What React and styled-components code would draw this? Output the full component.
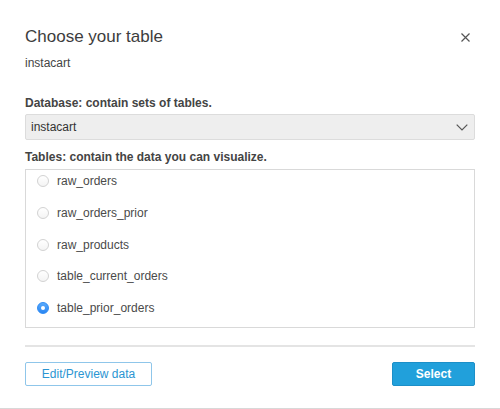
import React, { useState } from 'react';
import styled, { createGlobalStyle } from 'styled-components';

const GlobalStyle = createGlobalStyle`
	body {
		margin: 0;
		background: #fff;
		font-family: "Liberation Sans", Arial, Helvetica, sans-serif;
	}
`;

const Dialog = styled.div`
	width: 500px;
	height: 409px;
	box-sizing: border-box;
	padding: 27px 25px 0;
	border-bottom: 1px solid #d8d8d8;
	background: #fff;
	color: #444;
`;

const Header = styled.div`
	display: flex;
	justify-content: space-between;
	align-items: center;
	height: 20px;
`;

const Title = styled.h1`
	margin: 0;
	font-size: 17px;
	font-weight: normal;
	line-height: 20px;
	color: #3d3d3d;
`;

const CloseButton = styled.button`
	display: flex;
	align-items: center;
	justify-content: center;
	width: 14px;
	height: 14px;
	margin-right: 3px;
	padding: 0;
	border: none;
	background: none;
	cursor: pointer;
`;

const Subtitle = styled.div`
	margin-top: 8px;
	font-size: 12px;
	line-height: 16px;
	color: #444;
`;

const FieldLabel = styled.div`
	margin-top: ${props => props.top}px;
	font-size: 12px;
	font-weight: bold;
	line-height: 16px;
	color: #444;
`;

const SelectBox = styled.div`
	display: flex;
	align-items: center;
	justify-content: space-between;
	margin-top: 3px;
	height: 26px;
	box-sizing: border-box;
	padding: 0 6px 0 5px;
	border: 1px solid #dcdcdc;
	border-radius: 2px;
	background: #eeeeee;
	font-size: 12px;
	color: #333;
`;

const TableList = styled.div`
	margin-top: 4px;
	height: 159px;
	box-sizing: border-box;
	padding-top: 1px;
	border: 1px solid #d9d9d9;
	overflow: hidden;
`;

const Row = styled.label`
	display: flex;
	align-items: center;
	gap: 8px;
	height: 20px;
	padding-left: 11px;
	margin-bottom: 11.75px;
	font-size: 12px;
	color: #4a4a4a;
	cursor: pointer;
`;

const Radio = styled.span`
	width: 12px;
	height: 12px;
	box-sizing: border-box;
	border-radius: 50%;
	display: flex;
	align-items: center;
	justify-content: center;
	border: 1px solid ${props => (props.checked ? '#2f8cf5' : '#d2d2d2')};
	background: ${props => (props.checked ? 'linear-gradient(#5aaafb, #2a86f2)' : 'linear-gradient(#fff, #f4f4f4)')};

	&::after {
		content: '';
		display: ${props => (props.checked ? 'block' : 'none')};
		width: 4px;
		height: 4px;
		border-radius: 50%;
		background: #fff;
	}
`;

const Divider = styled.hr`
	margin: 17px 0 0;
	border: none;
	border-top: 2px solid #e4e4e4;
`;

const Footer = styled.div`
	display: flex;
	justify-content: space-between;
	margin-top: 15px;
`;

const Button = styled.button`
	height: 24px;
	box-sizing: border-box;
	padding: 0;
	width: ${props => props.width}px;
	border-radius: 2px;
	font-family: inherit;
	font-size: 12px;
	cursor: pointer;
	border: 1px solid ${props => (props.primary ? '#1c8fc8' : '#8fc6ea')};
	background: ${props => (props.primary ? '#21a0db' : '#fff')};
	color: ${props => (props.primary ? '#fff' : '#2b95d2')};
	font-weight: ${props => (props.primary ? 'bold' : 'normal')};
`;

const tables = ['raw_orders', 'raw_orders_prior', 'raw_products', 'table_current_orders', 'table_prior_orders'];

export default function App() {
	const [selected, setSelected] = useState('table_prior_orders');

	return (
		<>
			<GlobalStyle />
			<Dialog>
				<Header>
					<Title>Choose your table</Title>
					<CloseButton aria-label="Close">
						<svg width="9" height="9" viewBox="0 0 9 9">
							<path d="M0.5 0.5L8.5 8.5M8.5 0.5L0.5 8.5" stroke="#555" strokeWidth="1.2" />
						</svg>
					</CloseButton>
				</Header>
				<Subtitle>instacart</Subtitle>

				<FieldLabel top={24}>Database: contain sets of tables.</FieldLabel>
				<SelectBox>
					<span>instacart</span>
					<svg width="12" height="7" viewBox="0 0 12 7">
						<path d="M0.7 0.7L6 6L11.3 0.7" fill="none" stroke="#555" strokeWidth="1.2" />
					</svg>
				</SelectBox>

				<FieldLabel top={9}>Tables: contain the data you can visualize.</FieldLabel>
				<TableList>
					{tables.map(name => (
						<Row key={name} onClick={() => setSelected(name)}>
							<Radio checked={selected === name} />
							{name}
						</Row>
					))}
				</TableList>

				<Divider />
				<Footer>
					<Button width={127}>Edit/Preview data</Button>
					<Button primary width={83}>Select</Button>
				</Footer>
			</Dialog>
		</>
	);
}
